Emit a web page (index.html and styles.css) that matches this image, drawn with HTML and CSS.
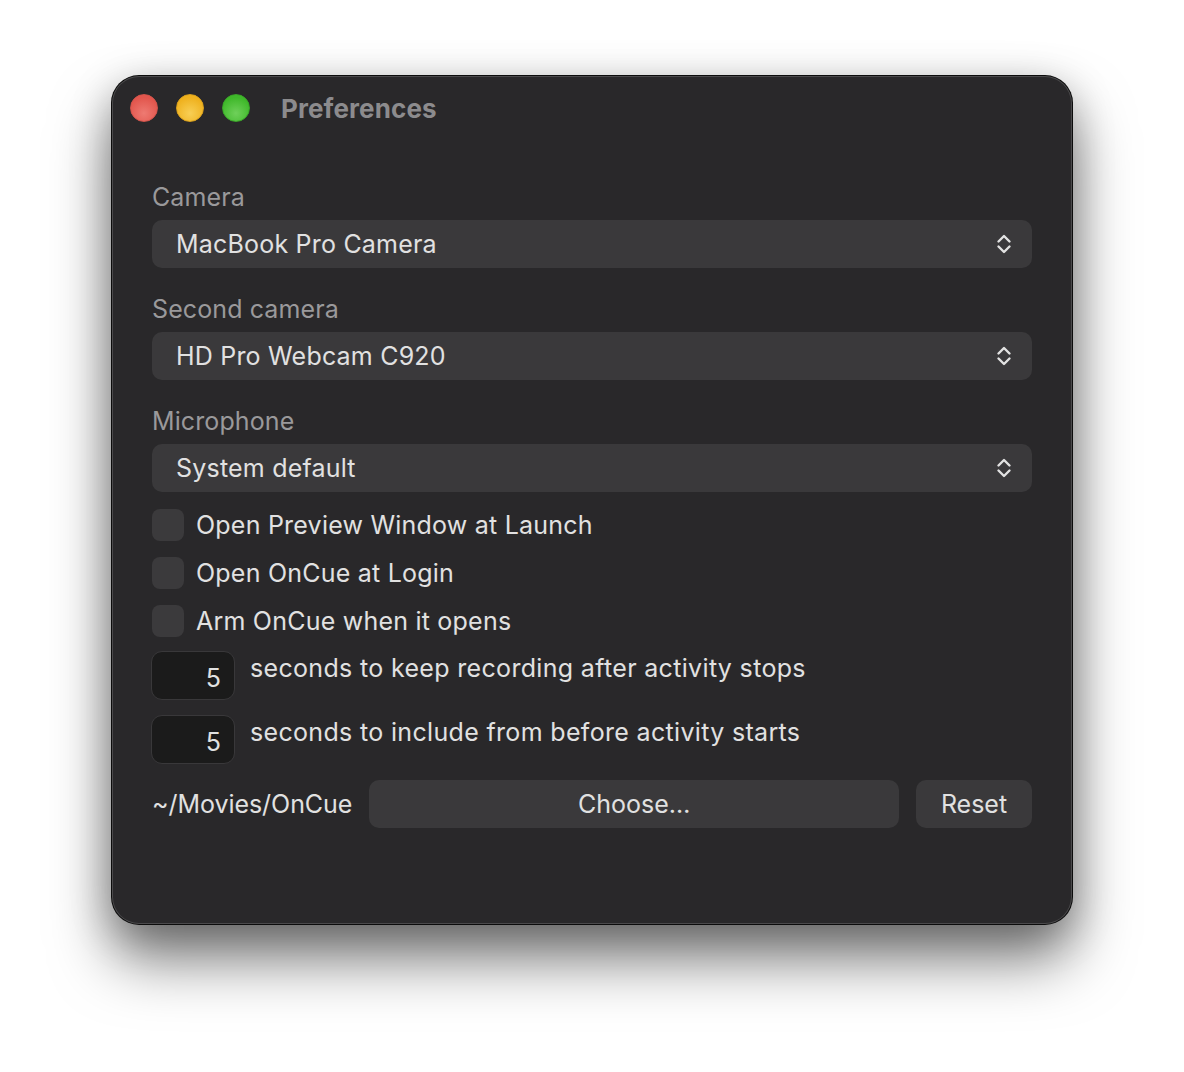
FILE: index.html
```html
<!DOCTYPE html>
<html>
<head>
<meta charset="utf-8">
<title>Preferences</title>
<link rel="stylesheet" href="styles.css">
</head>
<body>
<div class="window">
  <div class="titlebar">
    <span class="light red"></span>
    <span class="light yellow"></span>
    <span class="light green"></span>
    <span class="title">Preferences</span>
  </div>
  <div class="content">
    <div class="field">
      <div class="label">Camera</div>
      <div class="select"><span>MacBook Pro Camera</span>
        <svg class="chev" viewBox="0 0 16 22" width="16" height="22"><path d="M2.5 8.5 L8 3 L13.5 8.5 M2.5 13.5 L8 19 L13.5 13.5" fill="none" stroke="#e2e2e2" stroke-width="2.4" stroke-linecap="round" stroke-linejoin="round"/></svg>
      </div>
    </div>
    <div class="field">
      <div class="label">Second camera</div>
      <div class="select"><span>HD Pro Webcam C920</span>
        <svg class="chev" viewBox="0 0 16 22" width="16" height="22"><path d="M2.5 8.5 L8 3 L13.5 8.5 M2.5 13.5 L8 19 L13.5 13.5" fill="none" stroke="#e2e2e2" stroke-width="2.4" stroke-linecap="round" stroke-linejoin="round"/></svg>
      </div>
    </div>
    <div class="field last">
      <div class="label">Microphone</div>
      <div class="select"><span>System default</span>
        <svg class="chev" viewBox="0 0 16 22" width="16" height="22"><path d="M2.5 8.5 L8 3 L13.5 8.5 M2.5 13.5 L8 19 L13.5 13.5" fill="none" stroke="#e2e2e2" stroke-width="2.4" stroke-linecap="round" stroke-linejoin="round"/></svg>
      </div>
    </div>
    <div class="checks">
      <div class="check"><span class="box"></span><span>Open Preview Window at Launch</span></div>
      <div class="check"><span class="box"></span><span>Open OnCue at Login</span></div>
      <div class="check"><span class="box"></span><span>Arm OnCue when it opens</span></div>
    </div>
    <div class="nums">
      <div class="num-row"><span class="num">5</span><span class="num-text">seconds to keep recording after activity stops</span></div>
      <div class="num-row"><span class="num">5</span><span class="num-text">seconds to include from before activity starts</span></div>
    </div>
    <div class="folder">
      <span class="path">~/Movies/OnCue</span>
      <span class="btn choose">Choose…</span>
      <span class="btn reset">Reset</span>
    </div>
  </div>
</div>
</body>
</html>
```
FILE: styles.css
```css
html, body {
  margin: 0;
  padding: 0;
  background: #ffffff;
}
body {
  font-family: Inter, "Open Sans", sans-serif;
  padding: 76px 0 0 112px;
  height: 1072px;
  box-sizing: border-box;
  overflow: hidden;
}
.window {
  width: 960px;
  height: 848px;
  box-sizing: border-box;
  background: #29282a;
  border-radius: 27px;
  box-shadow:
    inset 0 0 0 1px rgba(255,255,255,0.16),
    0 0 0 1px #0c0c0c,
    0 36px 60px rgba(0,0,0,0.5),
    0 10px 40px rgba(0,0,0,0.25);
}
.titlebar {
  height: 64px;
  display: flex;
  align-items: center;
  padding-left: 18px;
  gap: 18px;
}
.light {
  width: 28px;
  height: 28px;
  border-radius: 50%;
  box-sizing: border-box;
}
.red {
  background: radial-gradient(circle at 50% 70%, #ee7a72 0%, #e2564d 70%);
  border: 1px solid #d4544b;
}
.yellow {
  background: radial-gradient(circle at 50% 70%, #f8cf55 0%, #efb11e 70%);
  border: 1px solid #dba21c;
}
.green {
  background: radial-gradient(circle at 50% 70%, #6fd05a 0%, #3fb82a 70%);
  border: 1px solid #3aa628;
}
.title {
  margin-left: 13px;
  font-size: 26px;
  font-weight: 700;
  color: #8c8b8d;
  letter-spacing: 0.1px;
}
.content {
  padding: 42px 40px 0 40px;
}
.field {
  margin-bottom: 26px;
}
.field.last {
  margin-bottom: 17px;
}
.label {
  font-size: 25px;
  line-height: 30px;
  color: #9a999b;
  margin-bottom: 8px;
  letter-spacing: 0.1px;
}
.select {
  height: 48px;
  border-radius: 10px;
  background: #3a393b;
  display: flex;
  align-items: center;
  justify-content: space-between;
  padding: 0 20px 0 24px;
  font-size: 25px;
  color: #e1e1e1;
  letter-spacing: 0.2px;
}
.chev {
  display: block;
}
.checks {
  display: flex;
  flex-direction: column;
  gap: 16px;
}
.check {
  display: flex;
  align-items: center;
  gap: 12px;
  height: 32px;
  font-size: 25px;
  color: #e1e1e1;
  letter-spacing: 0.22px;
}
.box {
  width: 32px;
  height: 32px;
  border-radius: 8px;
  background: #3b3a3c;
}
.nums {
  margin-top: 14px;
  display: flex;
  flex-direction: column;
  gap: 15px;
}
.num-row {
  display: flex;
  align-items: flex-start;
  gap: 15px;
}
.num {
  width: 84px;
  height: 49px;
  box-sizing: border-box;
  margin-left: -1px;
  border-radius: 11px;
  background: #1b1b1b;
  border: 1px solid #39383a;
  font-size: 25px;
  color: #e1e1e1;
  text-align: right;
  padding: 11px 13px 0 0;
  line-height: 30px;
}
.num-text {
  font-size: 25px;
  line-height: 30px;
  color: #e1e1e1;
  padding-top: 2px;
  letter-spacing: 0.33px;
}
.folder {
  margin-top: 16px;
  display: flex;
  align-items: center;
  gap: 17px;
  font-size: 25px;
  color: #e1e1e1;
}
.path {
  letter-spacing: -0.05px;
}
.btn {
  height: 48px;
  border-radius: 10px;
  background: #3a393b;
  display: flex;
  align-items: center;
  justify-content: center;
}
.choose {
  flex: 1;
}
.reset {
  width: 116px;
}
```
